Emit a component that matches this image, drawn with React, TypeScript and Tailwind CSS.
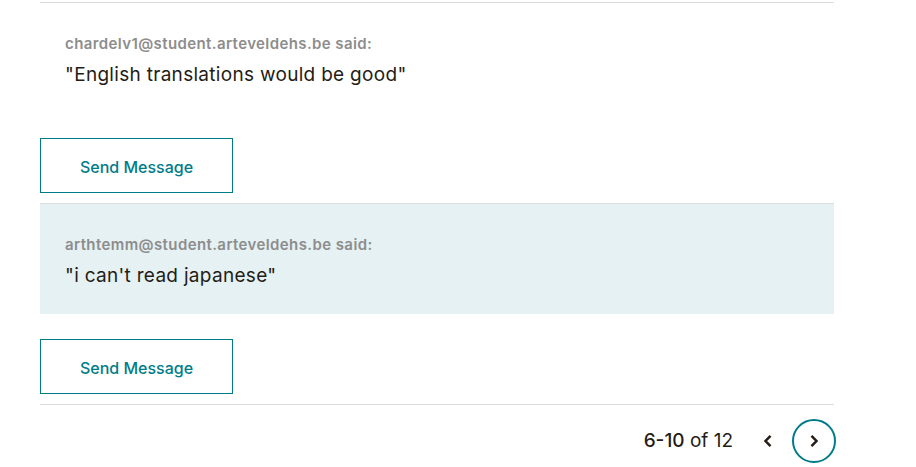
import React from 'react';

type Feedback = {
  email: string;
  message: string;
  highlighted?: boolean;
};

const feedback: Feedback[] = [
  { email: 'chardelv1@student.arteveldehs.be', message: 'English translations would be good' },
  { email: 'arthtemm@student.arteveldehs.be', message: "i can't read japanese", highlighted: true },
];

function FeedbackItem({ email, message, highlighted }: Feedback) {
  return (
    <div className="border-t border-[#dcdcdc]">
      <div className={`h-[110px] px-[25px] pt-[31px] ${highlighted ? 'bg-[#e5f1f3]' : ''}`}>
        <p className="text-[15px] leading-[20px] font-semibold tracking-[0.4px] text-[#8d8d8d]">{email} said:</p>
        <p className="mt-[7px] text-[19px] leading-[28px] tracking-[0.3px] text-[#241c15]">"{message}"</p>
      </div>
      <button className="mt-[25px] mb-[10px] h-[55px] w-[193px] border border-[#007c89] pt-[2px] text-[16px] font-medium text-[#007c89]">
        Send Message
      </button>
    </div>
  );
}

export default function App() {
  return (
    <div className="min-h-[467px] bg-white pt-[2px] font-['Inter',sans-serif]">
      <div className="ml-[40px] w-[794px]">
        {feedback.map((item, i) => (
          <FeedbackItem key={i} {...item} />
        ))}
        <div className="border-t border-[#dcdcdc]">
          <div className="flex items-center justify-end pt-[14px]">
            <span className="text-[19px] leading-[28px] text-[#241c15]">
              <span className="font-medium">6-10</span> of 12
            </span>
            <button className="ml-[23px] flex h-[24px] w-[24px] items-center justify-center text-[#241c15]">
              <svg width="12" height="14" viewBox="0 0 12 14" fill="none">
                <path d="M8.5 1.8 3.5 7 8.5 12.2" stroke="currentColor" strokeWidth="2.5" />
              </svg>
            </button>
            <button className="ml-[12px] -mr-[2px] flex h-[44px] w-[44px] items-center justify-center rounded-full border-2 border-[#007c89] text-[#241c15]">
              <svg width="12" height="14" viewBox="0 0 12 14" fill="none">
                <path d="M3.5 1.8 8.5 7 3.5 12.2" stroke="currentColor" strokeWidth="2.5" />
              </svg>
            </button>
          </div>
        </div>
      </div>
    </div>
  );
}
